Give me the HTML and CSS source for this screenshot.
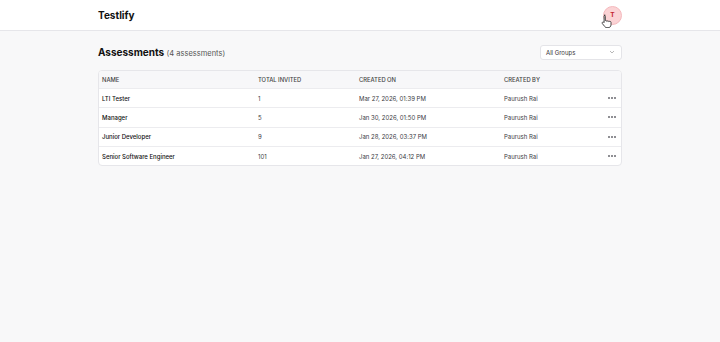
FILE: index.html
```html
<!DOCTYPE html>
<html lang="en">
<head>
  <meta charset="UTF-8">
  <title>Testlify - Assessments</title>
  <link rel="stylesheet" href="styles.css">
</head>
<body>
  <div class="topbar">
    <div class="container topbar-inner">
      <div class="logo">Testlify</div>
      <div class="avatar-wrap">
        <div class="avatar">T</div>
        <svg class="cursor" width="12" height="14" viewBox="0 0 12 14">
          <path d="M3.2 1.2c.7 0 1.1.5 1.1 1.1v4.3l.5-.1c.6 0 1 .4 1 .9.3-.4.7-.5 1.1-.5.5 0 .9.3 1 .8.3-.3.6-.4 1-.4.6 0 1.1.5 1.1 1.1v2.4c0 1.6-1.2 2.9-2.9 2.9H5.9c-.9 0-1.6-.4-2.1-1.1L1.3 9.5c-.3-.5-.2-1.1.3-1.4.4-.3 1-.2 1.3.2l.2.3V2.3c0-.6.5-1.1 1.1-1.1z" fill="#fff" stroke="#333" stroke-width="0.9" stroke-linejoin="round"/>
        </svg>
      </div>
    </div>
  </div>

  <div class="container main">
    <div class="title-row">
      <h1>Assessments <span class="count">(4 assessments)</span></h1>
      <div class="select">
        <span>All Groups</span>
        <svg width="6" height="4" viewBox="0 0 6 4"><path d="M1 1l2 2 2-2" fill="none" stroke="#999" stroke-width="0.7"/></svg>
      </div>
    </div>

    <div class="table">
      <div class="row head">
        <div class="c-name">NAME</div>
        <div class="c-inv">TOTAL INVITED</div>
        <div class="c-on">CREATED ON</div>
        <div class="c-by">CREATED BY</div>
        <div class="c-act"></div>
      </div>
      <div class="row">
        <div class="c-name strong">LTI Tester</div>
        <div class="c-inv">1</div>
        <div class="c-on">Mar 27, 2026, 01:39 PM</div>
        <div class="c-by">Paurush Rai</div>
        <div class="c-act"><span class="dots"><i></i><i></i><i></i></span></div>
      </div>
      <div class="row">
        <div class="c-name strong">Manager</div>
        <div class="c-inv">5</div>
        <div class="c-on">Jan 30, 2026, 01:50 PM</div>
        <div class="c-by">Paurush Rai</div>
        <div class="c-act"><span class="dots"><i></i><i></i><i></i></span></div>
      </div>
      <div class="row">
        <div class="c-name strong">Junior Developer</div>
        <div class="c-inv">9</div>
        <div class="c-on">Jan 28, 2026, 03:37 PM</div>
        <div class="c-by">Paurush Rai</div>
        <div class="c-act"><span class="dots"><i></i><i></i><i></i></span></div>
      </div>
      <div class="row">
        <div class="c-name strong">Senior Software Engineer</div>
        <div class="c-inv">101</div>
        <div class="c-on">Jan 27, 2026, 04:12 PM</div>
        <div class="c-by">Paurush Rai</div>
        <div class="c-act"><span class="dots"><i></i><i></i><i></i></span></div>
      </div>
    </div>
  </div>
</body>
</html>
```

FILE: styles.css
```css
body {
  margin: 0;
  font-family: Inter, 'Liberation Sans', Arial, sans-serif;
  background: #f8f8f9;
  color: #1f1f23;
  min-height: 100vh;
}

.container {
  width: 524px;
  margin: 0 auto;
}

.topbar {
  background: #fff;
  border-bottom: 1px solid #e6e6ea;
  height: 30px;
}

.topbar-inner {
  height: 30px;
  display: flex;
  align-items: center;
  justify-content: space-between;
}

.logo {
  font-size: 10px;
  font-weight: 700;
  color: #111;
}

.avatar-wrap {
  position: relative;
}

.avatar {
  width: 17px;
  height: 17px;
  border-radius: 50%;
  background: #fbd3d5;
  border: 1px solid #f5b9bd;
  color: #c4232f;
  font-size: 6.5px;
  font-weight: 700;
  display: flex;
  align-items: center;
  justify-content: center;
}

.cursor {
  position: absolute;
  left: -2px;
  top: 8px;
}

.main {
  padding-top: 13px;
}

.title-row {
  display: flex;
  align-items: center;
  justify-content: space-between;
  height: 16px;
}

h1 {
  margin: 0;
  font-size: 10px;
  font-weight: 700;
  color: #111;
}

.count {
  font-size: 7.5px;
  font-weight: 400;
  color: #555;
}

.select {
  width: 82px;
  height: 15px;
  box-sizing: border-box;
  background: #fff;
  border: 1px solid #e4e4e8;
  border-radius: 3px;
  display: flex;
  align-items: center;
  justify-content: space-between;
  padding: 0 6px 0 5px;
  font-size: 6px;
  color: #333;
}

.table {
  margin-top: 10px;
  background: #fff;
  border: 1px solid #e6e6ea;
  border-radius: 4px;
  overflow: hidden;
}

.row {
  display: flex;
  align-items: center;
  height: 19.3px;
  border-top: 1px solid #ececef;
  font-size: 6px;
  color: #3a3a3f;
  box-sizing: border-box;
}

.row.head {
  border-top: none;
  height: 17px;
  background: #f7f7f9;
  color: #444;
  font-size: 5.8px;
  font-weight: 500;
}

.strong {
  font-weight: 500;
  color: #111;
}

.c-name { width: 156px; padding-left: 3px; }
.c-inv { width: 101px; }
.c-on { width: 145px; }
.c-by { flex: 1; }
.c-act {
  width: 13px;
  display: flex;
}

.dots {
  display: flex;
  gap: 1px;
}

.dots i {
  width: 2px;
  height: 2px;
  border-radius: 50%;
  background: #6a6a70;
}
```
